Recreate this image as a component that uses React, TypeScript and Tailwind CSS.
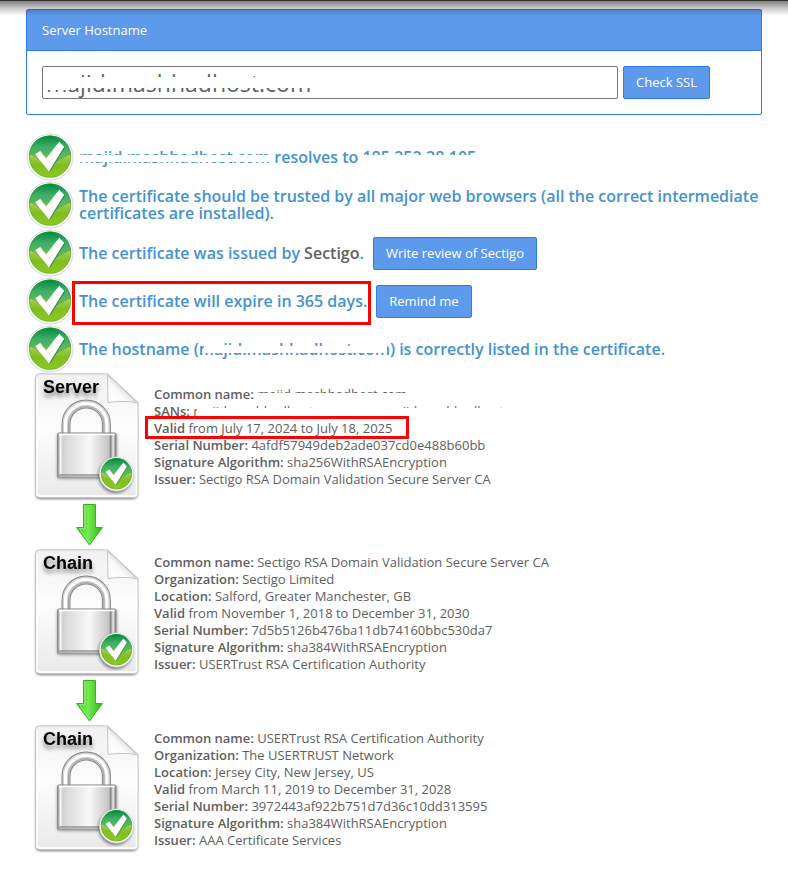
import { useState } from 'react';

const HOST = 'majid.mashhadhost.com';

type Field = { label: string; value: string; hidden?: 'name' | 'sans'; marked?: boolean };
type Cert = { kind: string; fields: Field[] };

const CERTS: Cert[] = [
  {
    kind: 'Server',
    fields: [
      { label: 'Common name:', value: HOST, hidden: 'name' },
      { label: 'SANs:', value: `${HOST}, www.${HOST}`, hidden: 'sans' },
      { label: 'Valid', value: 'from July 17, 2024 to July 18, 2025', marked: true },
      { label: 'Serial Number:', value: '4afdf57949deb2ade037cd0e488b60bb' },
      { label: 'Signature Algorithm:', value: 'sha256WithRSAEncryption' },
      { label: 'Issuer:', value: 'Sectigo RSA Domain Validation Secure Server CA' },
    ],
  },
  {
    kind: 'Chain',
    fields: [
      { label: 'Common name:', value: 'Sectigo RSA Domain Validation Secure Server CA' },
      { label: 'Organization:', value: 'Sectigo Limited' },
      { label: 'Location:', value: 'Salford, Greater Manchester, GB' },
      { label: 'Valid', value: 'from November 1, 2018 to December 31, 2030' },
      { label: 'Serial Number:', value: '7d5b5126b476ba11db74160bbc530da7' },
      { label: 'Signature Algorithm:', value: 'sha384WithRSAEncryption' },
      { label: 'Issuer:', value: 'USERTrust RSA Certification Authority' },
    ],
  },
  {
    kind: 'Chain',
    fields: [
      { label: 'Common name:', value: 'USERTrust RSA Certification Authority' },
      { label: 'Organization:', value: 'The USERTRUST Network' },
      { label: 'Location:', value: 'Jersey City, New Jersey, US' },
      { label: 'Valid', value: 'from March 11, 2019 to December 31, 2028' },
      { label: 'Serial Number:', value: '3972443af922b751d7d36c10dd313595' },
      { label: 'Signature Algorithm:', value: 'sha384WithRSAEncryption' },
      { label: 'Issuer:', value: 'AAA Certificate Services' },
    ],
  },
];

/* ── Shared gradients, referenced by every icon ── */
function Defs() {
  return (
    <svg className="absolute w-0 h-0" aria-hidden="true">
      <defs>
        <linearGradient id="lime" x1="0" y1="0" x2="0" y2="1">
          <stop offset="0" stopColor="#b4d878" />
          <stop offset="0.45" stopColor="#a4d058" />
          <stop offset="0.7" stopColor="#80be24" />
          <stop offset="1" stopColor="#8cc820" />
        </linearGradient>
        <linearGradient id="dome" x1="0" y1="0" x2="0" y2="1">
          <stop offset="0" stopColor="#008a3c" />
          <stop offset="0.45" stopColor="#42b068" />
          <stop offset="1" stopColor="#74bc48" />
        </linearGradient>
        <linearGradient id="paper" x1="0" y1="0" x2="0" y2="1">
          <stop offset="0" stopColor="#f1f1f1" />
          <stop offset="0.45" stopColor="#fdfdfd" />
          <stop offset="1" stopColor="#e9e9e9" />
        </linearGradient>
        <linearGradient id="fold" x1="0" y1="1" x2="0.6" y2="0.4">
          <stop offset="0" stopColor="#ffffff" />
          <stop offset="0.6" stopColor="#fafafa" />
          <stop offset="1" stopColor="#d2d2d2" />
        </linearGradient>
        <linearGradient id="steel" x1="0" y1="0" x2="1" y2="0">
          <stop offset="0" stopColor="#7d7d7d" />
          <stop offset="0.05" stopColor="#f8f8f8" />
          <stop offset="0.09" stopColor="#d0d0d0" />
          <stop offset="0.2" stopColor="#dedede" />
          <stop offset="0.55" stopColor="#f8f8f8" />
          <stop offset="0.88" stopColor="#c4c4c4" />
          <stop offset="0.91" stopColor="#808080" />
          <stop offset="0.95" stopColor="#ededed" />
          <stop offset="1" stopColor="#777777" />
        </linearGradient>
        <linearGradient id="leaf" x1="0" y1="0" x2="1" y2="0">
          <stop offset="0" stopColor="#3fc82c" />
          <stop offset="0.45" stopColor="#74ea4e" />
          <stop offset="1" stopColor="#2fb41c" />
        </linearGradient>
        <filter id="soft" x="-20%" y="-20%" width="140%" height="160%">
          <feGaussianBlur stdDeviation="1.6" />
        </filter>
      </defs>
    </svg>
  );
}

function CheckDisc() {
  return (
    <>
      <circle cx="24" cy="24" r="23" fill="#fff" stroke="#d8d8d8" />
      <circle cx="24" cy="23.6" r="21.2" fill="url(#lime)" />
      <path d="M2.8 23.6a21.2 21.2 0 0 1 42.4 0C42 18 37 30 24 30S6 18 2.8 23.6z" fill="url(#dome)" />
      <circle cx="24" cy="23.6" r="20.7" fill="none" stroke="#2f9440" strokeOpacity="0.3" />
      <path d="M11 21.800l4-2.200 5.500 7.500L34.600 10.600l4.300 3.800L24 39z" fill="#08813a" opacity="0.7" />
      <path d="M9 21.200l5.200-3.200 6 7.200L33.200 8.800l5 4.900L23 38.400z" fill="#fff" />
    </>
  );
}

function CheckIcon() {
  return (
    <svg viewBox="0 0 48 48" className="w-12 h-12 shrink-0" aria-hidden="true">
      <CheckDisc />
    </svg>
  );
}

function CertIcon({ kind }: { kind: string }) {
  return (
    <svg viewBox="0 0 128 128" className="w-32 h-32 shrink-0" role="img" aria-label={`${kind} certificate`}>
      <path d="M10 5h70l31 27v90a4 4 0 0 1-4 4H14a4 4 0 0 1-4-4z" fill="#444" opacity="0.7" filter="url(#soft)" />
      <path d="M13 0.8h68.5L112 29.5V121a3.5 3.5 0 0 1-3.5 3.5H13A3.5 3.5 0 0 1 9.5 121V4.3A3.5 3.5 0 0 1 13 0.8z" fill="url(#paper)" stroke="#c2c2c2" />
      <path d="M11 5v115.5q0 2.5 2.5 2.5H108q2.5 0 2.5-2.5V32" fill="none" stroke="#fff" strokeWidth="1.5" />
      <path d="M81.5 1.5L111.5 30Q98 27 82 29.5z" fill="url(#fold)" stroke="#c4c4c4" />

      {/* shackle */}
      <path d="M40 62V51a20.2 20 0 0 1 40.4 0v11" fill="none" stroke="#858585" strokeWidth="9" />
      <path d="M40 62V51a20.2 20 0 0 1 40.4 0v11" fill="none" stroke="#d2d2d2" strokeWidth="7" />
      <path d="M39.5 62V51a20.7 20.5 0 0 1 41.4 0v11" fill="none" stroke="#fff" strokeWidth="3" />
      <path d="M42.5 62V51a17.7 17.5 0 0 1 35.4 0v11" fill="none" stroke="#a2a2a2" strokeWidth="1" />

      <rect x="31" y="61" width="60" height="45" rx="2" fill="#444" opacity="0.5" filter="url(#soft)" />
      <rect x="31.5" y="60" width="58.5" height="44" rx="1.5" fill="url(#steel)" stroke="#8c8c8c" />
      <path d="M33 61.5h56" stroke="#fff" strokeWidth="1.5" />
      <path d="M33 102h56" stroke="#929292" strokeWidth="1.5" />

      <circle cx="89.5" cy="103" r="17" fill="#222" opacity="0.6" filter="url(#soft)" />
      <g transform="translate(72.7 83.3) scale(0.74)">
        <CheckDisc />
      </g>

      <text x="17" y="20" className="font-['Liberation_Sans',sans-serif] text-lg font-bold drop-shadow-[0px_4px_2px_#888]" fill="#000">{kind}</text>
    </svg>
  );
}

function ArrowDown() {
  return (
    <svg viewBox="0 0 128 48" className="w-32 h-12" aria-hidden="true">
      <path d="M57.5 3.5h12v23h7L63.5 44 50.5 26.5h7z" fill="url(#leaf)" stroke="#35b524" />
      <path d="M58.8 4.8v23h-5.3L63.5 41.5" fill="none" stroke="#a0f080" strokeOpacity="0.8" />
    </svg>
  );
}

/* Text with white strips laid over it, so only slivers of the letters stay visible */
function Redacted({ text, strips }: { text: string; strips: string[] }) {
  return (
    <span className="relative whitespace-nowrap">
      {text}
      {strips.map(s => <span key={s} className={`absolute bg-white ${s}`} />)}
    </span>
  );
}

function Button({ children, type = 'button' }: { children: React.ReactNode; type?: 'button' | 'submit' }) {
  return (
    <button type={type} className="shrink-0 rounded-xs border border-[#2f7de1] bg-[#5e9aeb] px-3 py-[7px] text-[13px] leading-[17px] font-normal text-white cursor-pointer hover:bg-[#4b8be2]">
      {children}
    </button>
  );
}

function CheckRow({ children }: { children: React.ReactNode }) {
  return (
    <li className="flex min-h-12 items-center gap-[5px] text-base leading-[17px] font-semibold text-[#4393d0]">
      <CheckIcon />
      {children}
    </li>
  );
}

function FieldLine({ field }: { field: Field }) {
  const { label, value, hidden, marked } = field;
  return (
    <div>
      <span className="relative">
        <b className="font-semibold">{label}</b>{' '}
        {hidden === 'name' && <Redacted text={value} strips={['-left-px -right-1 top-[8px] h-[9px]']} />}
        {hidden === 'sans' && <Redacted text={value} strips={['left-1 -right-1 top-[6px] h-[13px]', 'left-[310px] -right-2 top-0 h-[17px]']} />}
        {!hidden && value}
        {marked && <span className="absolute -left-[9px] -right-[17px] -top-[3px] -bottom-[2px] border-3 border-[#fe0000]" />}
      </span>
    </div>
  );
}

export default function App() {
  const [host, setHost] = useState(HOST);

  return (
    <div className="relative bg-white px-[26px] pt-[9px] pb-6 font-['Open_Sans',sans-serif] text-[13px] leading-[17px] text-[#606060]">
      <Defs />

      <form className="rounded-xs border border-[#2f7de1]" onSubmit={e => e.preventDefault()}>
        <label htmlFor="host" className="flex h-[41px] items-center border-b border-[#2f7de1] bg-[#5e9aeb] px-[15px] text-white">
          Server Hostname
        </label>
        <div className="flex items-end gap-[5px] p-[15px]">
          <div className="relative w-full max-w-[576px]">
            <input id="host" value={host} onChange={e => setHost(e.target.value)}
              className="block h-[33px] w-full rounded-xs border border-[#767676] px-[3px] text-[23px] leading-[30px] text-[#606060]" />
            <span className="pointer-events-none absolute left-1 w-[280px] top-[11px] h-[11px] bg-white" />
            <span className="pointer-events-none absolute left-1 w-6 top-[4px] h-[20px] bg-white" />
          </div>
          <Button type="submit">Check SSL</Button>
        </div>
      </form>

      <ul className="mt-[18px]">
        <CheckRow>
          <span>
            <Redacted text={HOST} strips={['-left-px -right-px top-[9px] h-[7px]']} /> resolves to{' '}
            <Redacted text="185.252.28.105" strips={['-left-px -right-px top-[9px] h-[12px]']} />
          </span>
        </CheckRow>
        <CheckRow>
          <span>The certificate should be trusted by all major web browsers (all the correct intermediate certificates are installed).</span>
        </CheckRow>
        <CheckRow>
          <span className="mr-1">The certificate was issued by <a href="#sectigo" className="text-[#606060]">Sectigo</a>.</span>
          <Button>Write review of Sectigo</Button>
        </CheckRow>
        <CheckRow>
          <span className="relative mr-1">
            The certificate will expire in 365 days.
            <span className="absolute -left-[7px] -right-1 -top-3 -bottom-[15px] border-3 border-[#fe0000]" />
          </span>
          <Button>Remind me</Button>
        </CheckRow>
        <CheckRow>
          <span>
            The hostname (
            <Redacted text={HOST} strips={['left-[5px] right-[3px] top-[8px] h-[7px]']} />
            ) is correctly listed in the certificate.
          </span>
        </CheckRow>
      </ul>

      {CERTS.map((cert, i) => (
        <section key={i}>
          {i > 0 && <ArrowDown />}
          <div className="flex items-center">
            <CertIcon kind={cert.kind} />
            <div className="min-w-0">
              {cert.fields.map(f => <FieldLine key={f.label} field={f} />)}
            </div>
          </div>
        </section>
      ))}

      {/* shadow cast by the bar above the page */}
      <div className="pointer-events-none absolute inset-x-0 top-0 h-4 border-t border-[#333] bg-linear-to-b from-black/50 via-black/20 to-transparent" />
    </div>
  );
}
